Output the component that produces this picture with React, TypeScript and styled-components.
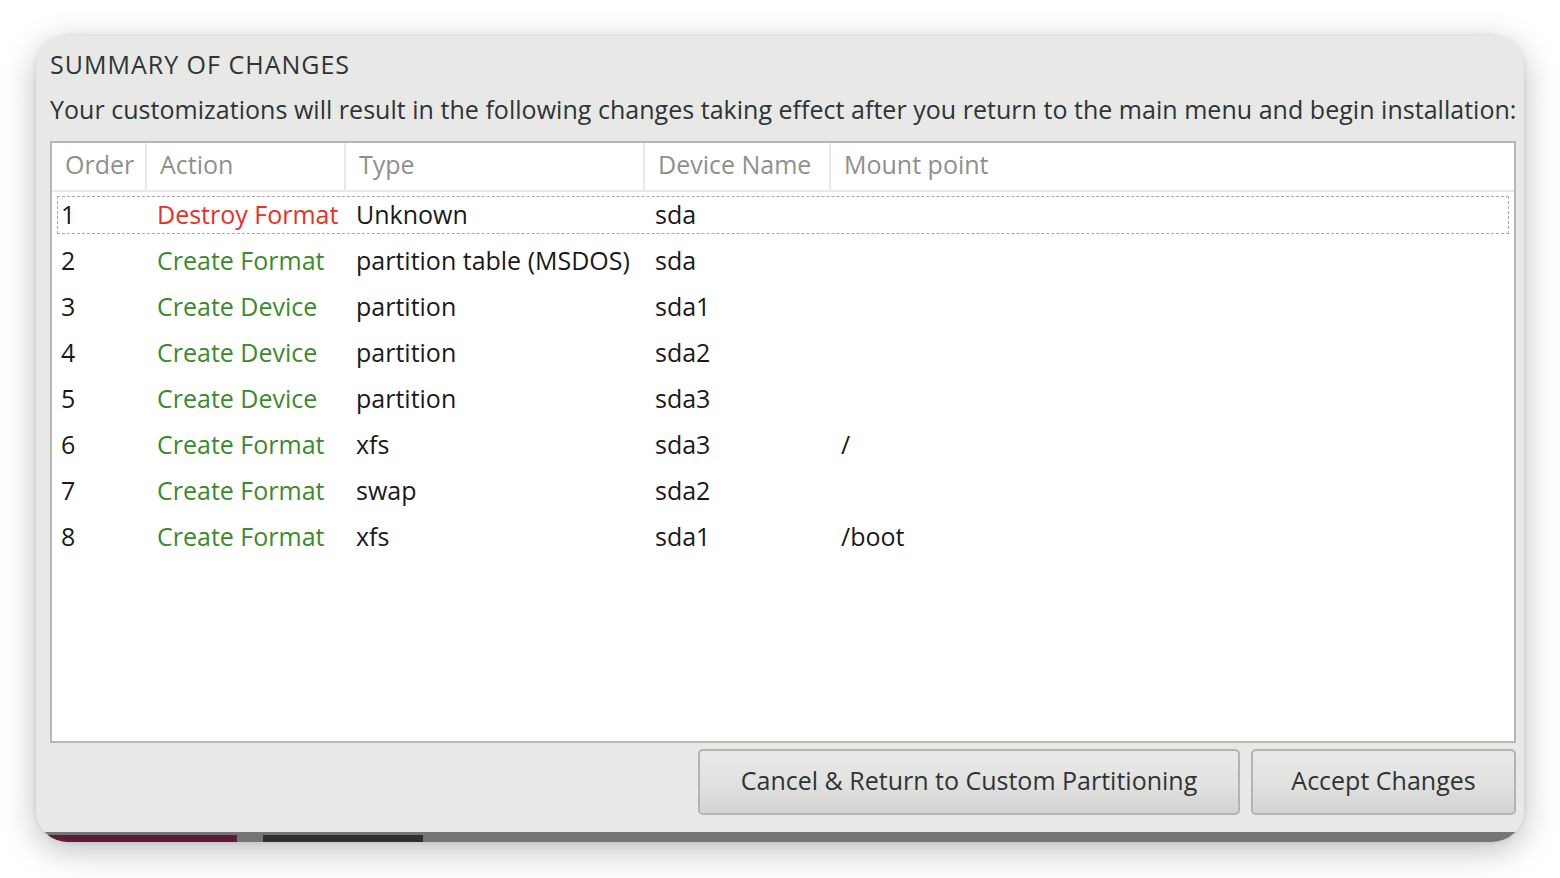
import React from "react";
import styled, { createGlobalStyle } from "styled-components";

const Global = createGlobalStyle`
  html, body { margin: 0; padding: 0; background: #ffffff; }
  body { font-family: "Open Sans", "Noto Sans", sans-serif; }
  * { box-sizing: border-box; }
`;

const Page = styled.div`
  width: 1560px;
  height: 878px;
  padding: 36px;
  background: #ffffff;
`;

const Window = styled.div`
  width: 1488px;
  height: 806px;
  border-radius: 32px;
  overflow: hidden;
  display: flex;
  flex-direction: column;
  box-shadow: 0 8px 34px rgba(0, 0, 0, 0.26), 0 0 5px rgba(0, 0, 0, 0.1);
`;

const Dialog = styled.div`
  flex: 1;
  background: #e8e8e7;
  display: flex;
  flex-direction: column;
  padding: 12px 8px 17px 14px;
`;

const Title = styled.div`
  font-size: 25px;
  font-weight: 500;
  color: #2e3436;
  line-height: 32px;
  letter-spacing: 1px;
`;

const Description = styled.div`
  margin-top: 13px;
  font-size: 25px;
  color: #2e3436;
  line-height: 32px;
  white-space: nowrap;
  letter-spacing: 0.03px;
`;

const TableBox = styled.div`
  margin-top: 16px;
  height: 602px;
  border: 2px solid #b6b6b3;
  background: #ffffff;
  display: flex;
  flex-direction: column;
`;

const cols = "95px 199px 299px 186px 1fr";

const HeaderRow = styled.div`
  display: grid;
  grid-template-columns: ${cols};
  height: 49px;
  border-bottom: 2px solid #e8e8e7;
`;

const HeaderCell = styled.div<{ $last?: boolean }>`
  display: flex;
  align-items: center;
  padding-left: 13px;
  padding-bottom: 6px;
  font-size: 25px;
  color: #8f908d;
  border-right: ${(p) => (p.$last ? "none" : "2px solid #e8e8e7")};
  white-space: nowrap;
`;

const Body = styled.div`
  display: flex;
  flex-direction: column;
  padding-top: 2px;
`;

const Row = styled.div<{ $focus?: boolean }>`
  display: grid;
  grid-template-columns: ${cols};
  height: 46px;
  align-items: center;
  position: relative;
  ${(p) =>
    p.$focus &&
    `
    &::after {
      content: "";
      position: absolute;
      left: 5px;
      right: 5px;
      top: 2px;
      bottom: 6px;
      border: 1px dashed #a8a8a8;
    }
  `}
`;

const Cell = styled.div<{ $color?: string; $first?: boolean }>`
  font-size: 25px;
  color: ${(p) => p.$color || "#1a1a1a"};
  padding-left: ${(p) => (p.$first ? 9 : 10)}px;
  white-space: nowrap;
  line-height: 32px;
  margin-top: -6px;
`;

const ButtonRow = styled.div`
  margin-top: 6px;
  display: flex;
  justify-content: flex-end;
  gap: 11px;
`;

const Button = styled.button<{ $w: number }>`
  width: ${(p) => p.$w}px;
  height: 66px;
  border: 2px solid #b3b3b0;
  border-radius: 5px;
  background: linear-gradient(to bottom, #e9e9e8 0%, #e2e2e0 50%, #d3d3d1 100%);
  font-family: "Open Sans", "Noto Sans", sans-serif;
  font-size: 25px;
  color: #2e3436;
  padding: 0 0 4px 0;
  cursor: pointer;
`;

const BottomStrip = styled.div`
  height: 10px;
  background: #757575;
  display: flex;
  align-items: flex-end;
  padding-left: 12px;
`;

const Tab = styled.div<{ $w: number; $bg: string; $ml: number }>`
  width: ${(p) => p.$w}px;
  margin-left: ${(p) => p.$ml}px;
  height: 7px;
  background: ${(p) => p.$bg};
`;

type RowData = [string, string, string, string, string];

const rows: RowData[] = [
  ["1", "Destroy Format", "Unknown", "sda", ""],
  ["2", "Create Format", "partition table (MSDOS)", "sda", ""],
  ["3", "Create Device", "partition", "sda1", ""],
  ["4", "Create Device", "partition", "sda2", ""],
  ["5", "Create Device", "partition", "sda3", ""],
  ["6", "Create Format", "xfs", "sda3", "/"],
  ["7", "Create Format", "swap", "sda2", ""],
  ["8", "Create Format", "xfs", "sda1", "/boot"],
];

export default function App() {
  return (
    <>
      <Global />
      <Page>
        <Window>
          <Dialog>
            <Title>SUMMARY OF CHANGES</Title>
            <Description>
              Your customizations will result in the following changes taking effect after you
              return to the main menu and begin installation:
            </Description>
            <TableBox>
              <HeaderRow>
                <HeaderCell>Order</HeaderCell>
                <HeaderCell>Action</HeaderCell>
                <HeaderCell>Type</HeaderCell>
                <HeaderCell>Device Name</HeaderCell>
                <HeaderCell $last>Mount point</HeaderCell>
              </HeaderRow>
              <Body>
                {rows.map((r, i) => (
                  <Row key={r[0]} $focus={i === 0}>
                    <Cell $first>{r[0]}</Cell>
                    <Cell $color={r[1].startsWith("Destroy") ? "#e8302a" : "#3b8a2b"}>{r[1]}</Cell>
                    <Cell>{r[2]}</Cell>
                    <Cell>{r[3]}</Cell>
                    <Cell>{r[4]}</Cell>
                  </Row>
                ))}
              </Body>
            </TableBox>
            <ButtonRow>
              <Button $w={542}>Cancel &amp; Return to Custom Partitioning</Button>
              <Button $w={265}>Accept Changes</Button>
            </ButtonRow>
          </Dialog>
          <BottomStrip>
            <Tab $w={189} $ml={0} $bg="#5f1b38" />
            <Tab $w={160} $ml={26} $bg="#2e2e2e" />
          </BottomStrip>
        </Window>
      </Page>
    </>
  );
}
